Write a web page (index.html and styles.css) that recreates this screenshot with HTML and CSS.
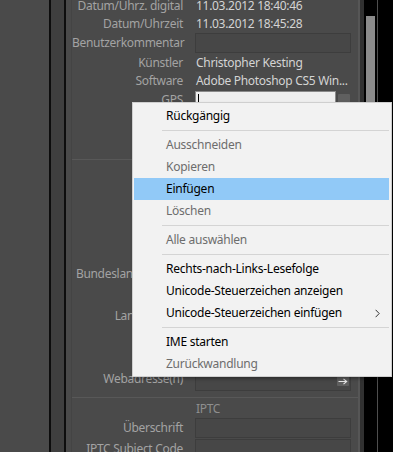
FILE: index.html
```html
<!DOCTYPE html>
<html>
	<head>
		<meta charset="utf-8">
		<title>Metadaten</title>
		<link rel="stylesheet" href="styles.css">
	</head>
	<body>
		<div class="side"></div>
		<div class="strip"></div>
		<div class="gap"></div>

		<div class="panel">
			<div class="sec sec1">
				<div class="row"><span class="lbl">Datum/Uhrz. digital</span><span class="val">11.03.2012 18:40:46</span></div>
				<div class="row"><span class="lbl">Datum/Uhrzeit</span><span class="val">11.03.2012 18:45:28</span></div>
				<div class="row frow"><span class="lbl">Benutzerkommentar</span><span class="box"></span></div>
				<div class="row"><span class="lbl">Künstler</span><span class="val">Christopher Kesting</span></div>
				<div class="row"><span class="lbl">Software</span><span class="val">Adobe Photoshop CS5 Win...</span></div>
				<div class="row frow">
					<span class="lbl">GPS</span>
					<span class="box edit"><span class="input"><span class="caret"></span></span><span class="go"></span></span>
				</div>
			</div>

			<div class="sec sec2">
				<div class="row frow"><span class="lbl">Bundesland/Kanton</span><span class="box"></span></div>
				<div class="row frow"><span class="lbl"></span><span class="box"></span></div>
				<div class="row frow"><span class="lbl">Land/Region</span><span class="box"></span></div>
				<div class="row frow"><span class="lbl"></span><span class="box"></span></div>
				<div class="row frow"><span class="lbl"></span><span class="box"></span></div>
				<div class="row frow">
					<span class="lbl">Webadresse(n)</span>
					<span class="box link">
						<span class="go">
							<svg width="10" height="7" viewBox="0 0 10 7"><path d="M0.5 3.5H8.5M5.5 0.8L8.7 3.5L5.5 6.2" fill="none" stroke="#e6e6e6" stroke-width="1.1"/></svg>
						</span>
					</span>
				</div>
			</div>

			<div class="sec sec3">
				<div class="head">IPTC</div>
				<div class="row frow"><span class="lbl">Überschrift</span><span class="box"></span></div>
				<div class="row frow"><span class="lbl">IPTC Subject Code</span><span class="box"></span></div>
			</div>
		</div>

		<div class="edge"></div>
		<div class="track"></div>
		<div class="scroll">
			<div class="thumb"></div>
			<div class="rail"></div>
		</div>

		<div class="menu">
			<div class="item">Rückgängig</div>
			<div class="sep"></div>
			<div class="item off">Ausschneiden</div>
			<div class="item off">Kopieren</div>
			<div class="item hot">Einfügen</div>
			<div class="item off">Löschen</div>
			<div class="sep"></div>
			<div class="item off">Alle auswählen</div>
			<div class="sep"></div>
			<div class="item">Rechts-nach-Links-Lesefolge</div>
			<div class="item">Unicode-Steuerzeichen anzeigen</div>
			<div class="item sub">
				Unicode-Steuerzeichen einfügen
				<svg width="5" height="9" viewBox="0 0 5 9"><path d="M0.6 0.8L4.2 4.5L0.6 8.2" fill="none" stroke="#333" stroke-width="1"/></svg>
			</div>
			<div class="sep"></div>
			<div class="item">IME starten</div>
			<div class="item off">Zurückwandlung</div>
		</div>
	</body>
</html>
```

FILE: styles.css
```css
*{
	margin: 0;
	padding: 0;
	box-sizing: border-box;
}
body{
	width: 393px;
	height: 452px;
	overflow: hidden;
	display: flex;
	background-color: #000;
	font-family: "Noto Sans", "Open Sans", sans-serif;
	font-size: 12px;
}
.side{
	width: 49px;
	background-color: #4a4a4a;
}
.strip{
	width: 17px;
	background-color: #3f3f3f;
	border-left: 2px solid #0d0d0d;
	border-right: 2px solid #0d0d0d;
}
.gap{
	width: 5px;
	background-color: #4a4a4a;
}
.panel{
	width: 287px;
	background-color: #4a4a4a;
	border-left: 1px solid #444;
	letter-spacing: -0.3px;
}
.sec1{
	margin-top: -3px;
	padding-bottom: 48px;
	border-bottom: 1px solid #585858;
}
.sec2{
	padding-top: 104px;
	padding-bottom: 7px;
	border-bottom: 1px solid #585858;
}
.row{
	display: flex;
	align-items: flex-start;
	height: 18px;
	line-height: 18px;
	white-space: nowrap;
}
.frow{
	height: 21px;
	line-height: 19px;
}
.lbl{
	flex: none;
	width: 111px;
	text-align: right;
	color: #a3a3a3;
}
.val{
	margin-left: 13px;
	color: #d4d4d4;
}
.box{
	display: flex;
	justify-content: flex-end;
	align-items: center;
	margin-left: 12px;
	width: 156px;
	height: 20px;
	background-color: #474747;
	border: 1px solid #3d3d3d;
}
.edit{
	margin-top: 1px;
	background-color: transparent;
	border: none;
}
.edit .input{
	flex: 1;
	height: 20px;
	background-color: #efefef;
	border: 1px solid #8a8a8a;
	padding: 2px 0 0 2px;
}
.caret{
	display: block;
	width: 1px;
	height: 12px;
	background-color: #000;
}
.go{
	display: flex;
	justify-content: center;
	align-items: center;
	width: 12px;
	height: 10px;
	margin: 0 1px 0 2px;
	background-color: #5f5f5f;
	border-radius: 1px;
}
.edit .go{
	align-self: flex-start;
	margin-top: 3px;
	margin-right: 1px;
}
.link{
	margin-top: 2px;
}
.link .go{
	margin-right: 1px;
}
.head{
	height: 20px;
	line-height: 22px;
	padding-left: 124px;
	color: #8e8e8e;
}
.edge{
	width: 2px;
	background-color: #565656;
}
.track{
	width: 4px;
	background-color: #313131;
}
.scroll{
	flex: 1;
	display: flex;
	background-color: #000;
}
.thumb{
	width: 9px;
	height: 300px;
	margin: 16px 0 0 2px;
	background-color: #8b8b8b;
}
.rail{
	width: 1px;
	margin-left: 2px;
	background-color: #4e4e4e;
}

/* Kontextmenü */
.menu{
	position: absolute;
	left: 132px;
	top: 102px;
	width: 260px;
	padding: 2px 2px 1px 1px;
	background-color: #f2f2f2;
	border: 1px solid #cfcfcf;
	box-shadow: 2px 2px 3px rgba(0, 0, 0, 0.35);
	font-family: "Noto Sans", "Open Sans", sans-serif;
	font-size: 12px;
	letter-spacing: -0.25px;
}
.item{
	height: 22px;
	line-height: 22px;
	padding-left: 32px;
	color: #000;
	white-space: nowrap;
}
.off{
	color: #6d6d6d;
}
.hot{
	background-color: #91c9f7;
}
.sub{
	display: flex;
	justify-content: space-between;
	align-items: center;
	padding-right: 9px;
}
.sep{
	height: 1px;
	margin: 3px 0 3px 28px;
	background-color: #d4d4d4;
}
```
